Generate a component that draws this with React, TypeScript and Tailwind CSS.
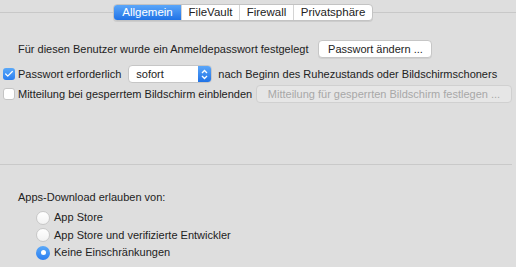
import { Check } from "lucide-react";

const tabs = ["Allgemein", "FileVault", "Firewall", "Privatsphäre"];

function Checkbox({ checked }: { checked?: boolean }) {
  return checked ? (
    <span className="flex h-[12px] w-[12px] shrink-0 items-center justify-center rounded-[3px] bg-gradient-to-b from-[#5aa8f8] to-[#2a7ef0] text-white">
      <Check size={10} strokeWidth={3} />
    </span>
  ) : (
    <span className="h-[12px] w-[12px] shrink-0 rounded-[3px] border border-[#c4c4c4] bg-white" />
  );
}

function Radio({ checked }: { checked?: boolean }) {
  return checked ? (
    <span className="flex h-[14px] w-[14px] shrink-0 items-center justify-center rounded-full bg-gradient-to-b from-[#5aa8f8] to-[#2a7ef0]">
      <span className="h-[5px] w-[5px] rounded-full bg-white" />
    </span>
  ) : (
    <span className="h-[14px] w-[14px] shrink-0 rounded-full border border-[#c8c8c8] bg-gradient-to-b from-white to-[#f2f2f2]" />
  );
}

export default function App() {
  return (
    <div className="h-[267px] w-[516px] overflow-hidden whitespace-nowrap bg-[#dedede] text-[11px] text-[#222] font-['Liberation_Sans',Arial,sans-serif]">
      <div className="relative h-[24px] pt-[4px]">
        <div className="absolute left-0 right-0 top-[12px] h-px bg-[#c8c8c8]" />
        <div className="relative ml-[113px] flex h-[17px] w-fit overflow-hidden rounded-[4px] border border-[#c3c3c3] bg-white text-[11.5px] shadow-[0_1px_0_rgba(0,0,0,0.08)]">
          {tabs.map((t, i) => (
            <div
              key={t}
              className={
                i === 0
                  ? "flex w-[67px] items-center justify-center bg-gradient-to-b from-[#5aa6f9] to-[#1f72e6] text-white"
                  : i === 1
                    ? "flex w-[58px] items-center justify-center border-l border-[#d4d4d4]"
                    : i === 2
                      ? "flex w-[54px] items-center justify-center border-l border-[#d4d4d4]"
                      : "flex w-[79px] items-center justify-center border-l border-[#d4d4d4]"
              }
            >
              {t}
            </div>
          ))}
        </div>
      </div>

      <div className="mt-[16px] flex h-[18px] items-center pl-[18px]">
        <span>Für diesen Benutzer wurde ein Anmeldepasswort festgelegt</span>
        <button className="ml-[10px] flex h-[18px] w-[114px] shrink-0 items-center justify-center rounded-[4px] border border-[#c6c6c6] bg-white shadow-[0_1px_0_rgba(0,0,0,0.06)]">
          Passwort ändern ...
        </button>
      </div>

      <div className="mt-[7px] flex h-[18px] items-center pl-[3px]">
        <Checkbox checked />
        <span className="ml-[3px]">Passwort erforderlich</span>
        <div className="ml-[7px] flex h-[18px] w-[84px] shrink-0 overflow-hidden rounded-[4px] border border-[#c6c6c6] bg-white">
          <span className="flex-1 pl-[7px] leading-[16px]">sofort</span>
          <span className="flex w-[13px] flex-col items-center justify-center bg-gradient-to-b from-[#5aa6f9] to-[#1f72e6] text-white">
            <svg width="7" height="11" viewBox="0 0 7 11" fill="none" stroke="white" strokeWidth="1.3">
              <path d="M1 4 L3.5 1.5 L6 4" />
              <path d="M1 7 L3.5 9.5 L6 7" />
            </svg>
          </span>
        </div>
        <span className="ml-[6px]">nach Beginn des Ruhezustands oder Bildschirmschoners</span>
      </div>

      <div className="mt-[2px] flex h-[18px] items-center pl-[3px]">
        <Checkbox />
        <span className="ml-[3px]">Mitteilung bei gesperrtem Bildschirm einblenden</span>
        <button className="ml-auto mr-[4px] flex h-[18px] w-[256px] shrink-0 items-center justify-center rounded-[4px] border border-[#d0d0d0] bg-[#e6e6e6] text-[#a8a8a8]">
          Mitteilung für gesperrten Bildschirm festlegen ...
        </button>
      </div>

      <div className="mr-[4px] mt-[61px] h-px bg-[#c9c9c9]" />

      <div className="mt-[24px] pl-[18px]">Apps-Download erlauben von:</div>
      <div className="mt-[5px] flex flex-col gap-[3.5px] pl-[36px]">
        <div className="flex h-[14px] items-center gap-[4px]">
          <Radio />
          <span>App Store</span>
        </div>
        <div className="flex h-[14px] items-center gap-[4px]">
          <Radio />
          <span>App Store und verifizierte Entwickler</span>
        </div>
        <div className="flex h-[14px] items-center gap-[4px]">
          <Radio checked />
          <span>Keine Einschränkungen</span>
        </div>
      </div>
    </div>
  );
}
